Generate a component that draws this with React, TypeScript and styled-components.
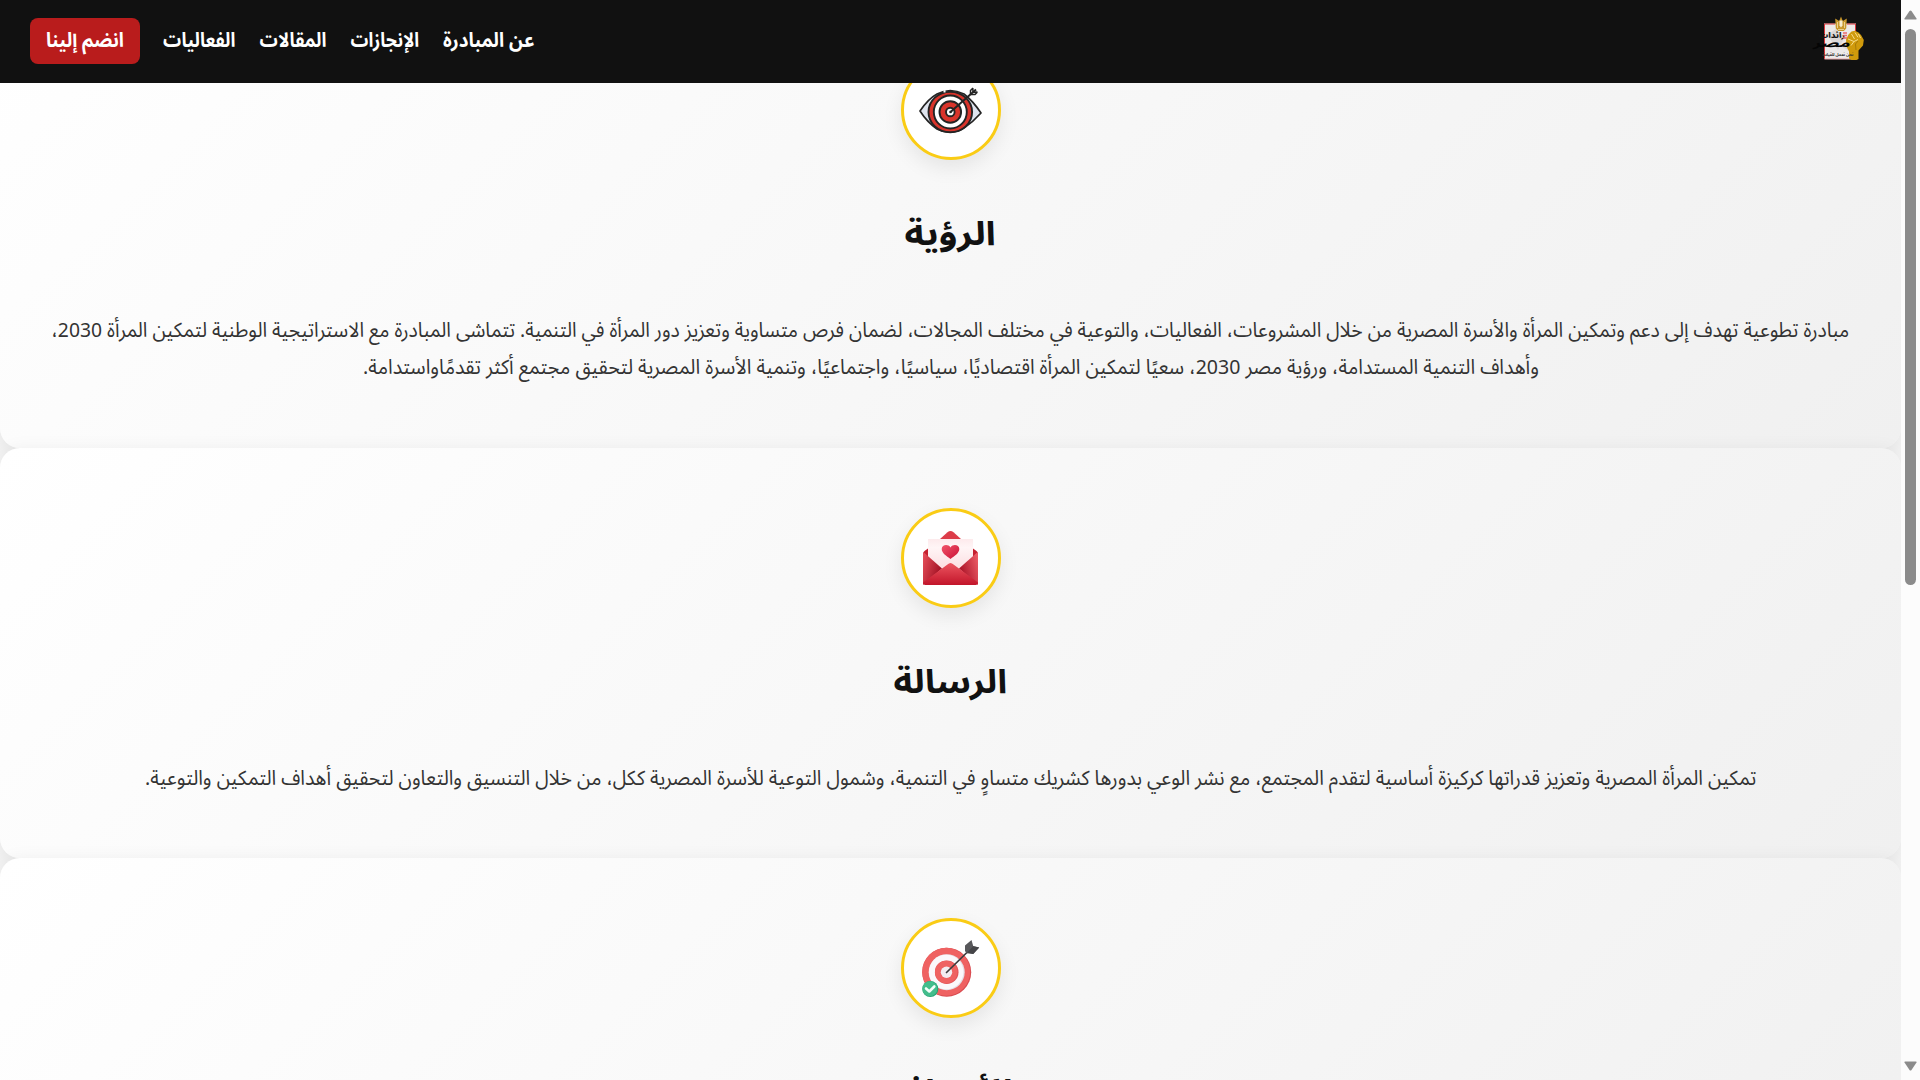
import React, { useLayoutEffect, useRef, useState } from "react";
import styled, { createGlobalStyle } from "styled-components";

const GlobalStyle = createGlobalStyle`
  *, *::before, *::after { box-sizing: border-box; }
  html, body { margin: 0; height: 100%; overflow: hidden; }
  body {
    background: #f5f5f5;
    font-family: "Noto Sans Arabic", "Noto Sans", "DejaVu Sans", sans-serif;
  }
  #root { height: 100%; }
`;

const Window = styled.div`
  display: flex;
  width: 100%;
  height: 1080px;
  overflow: hidden;
`;

const Viewport = styled.div`
  position: relative;
  flex: 1;
  min-width: 0;
  overflow: hidden;
`;

const Header = styled.header`
  position: absolute;
  inset: 0 0 auto 0;
  z-index: 10;
  display: flex;
  align-items: center;
  justify-content: space-between;
  height: 83px;
  padding: 0 36px 1px 30px;
  background: #111;
  direction: rtl;
`;

const Nav = styled.nav`
  display: flex;
  align-items: center;
  gap: 24px;
`;

const NavLink = styled.a`
  color: #fff;
  font-size: 20px;
  font-weight: 700;
  line-height: 32px;
  text-decoration: none;
`;

const JoinButton = styled(NavLink)`
  display: flex;
  align-items: center;
  justify-content: center;
  width: 110px;
  height: 46px;
  margin-right: -1px;
  border-radius: 8px;
  background: #b91c1c;
`;

const Sections = styled.main`
  display: flex;
  flex-direction: column;
  direction: rtl;
`;

const Card = styled.section`
  display: flex;
  flex-direction: column;
  align-items: center;
  flex-shrink: 0;
  padding: 60px 0 61px;
  border-radius: 20px;
  background: linear-gradient(135deg, #ffffff, #f0f0f0);
  box-shadow: 0 4px 20px rgba(0, 0, 0, 0.08);
`;

const IconCircle = styled.div`
  display: flex;
  align-items: center;
  justify-content: center;
  width: 100px;
  height: 100px;
  border: 3px solid #facc15;
  border-radius: 50%;
  background: #fff;
  box-shadow: 0 8px 20px rgba(0, 0, 0, 0.08);
`;

const Title = styled.h2`
  margin: 48px 0 0;
  color: #111;
  font-size: 33px;
  font-weight: 700;
  line-height: 54px;
`;

const Description = styled.div`
  display: flex;
  flex-direction: column;
  align-items: center;
  margin-top: 50px;
  color: #333;
  font-size: 20.5px;
  line-height: 37.4px;
`;

const FitBox = styled.span<{ $width: number }>`
  display: flex;
  justify-content: center;
  width: ${(p) => p.$width}px;
  white-space: nowrap;
`;

const FitInner = styled.span`
  flex-shrink: 0;
`;

/** A single line of text whose glyphs are condensed to fill the given width. */
function FitText({ width, children }: { width: number; children: string }) {
  const ref = useRef<HTMLSpanElement>(null);
  const [scale, setScale] = useState(1);
  useLayoutEffect(() => {
    if (ref.current) setScale(width / ref.current.offsetWidth);
  }, [width, children]);
  return (
    <FitBox $width={width}>
      <FitInner ref={ref} style={{ transform: `scaleX(${scale})` }}>
        {children}
      </FitInner>
    </FitBox>
  );
}

const Scrollbar = styled.div`
  display: flex;
  flex-direction: column;
  align-items: center;
  width: 19px;
  padding: 10px 0 9px;
  background: #fcfcfc;
`;

const Thumb = styled.div`
  width: 11px;
  height: 556px;
  margin: 9px 0 auto;
  border-radius: 6px;
  background: #8b8b8b;
`;

const LogoText = styled.text`
  font-family: "Noto Sans Arabic", "DejaVu Sans", sans-serif;
  font-weight: 800;
  text-anchor: middle;
  direction: rtl;
`;

const Arrow = ({ down }: { down?: boolean }) => (
  <svg width="13" height="10" viewBox="0 0 13 10">
    <path
      d={down ? "M1 .5h11q1 0 .5 1L7.5 9q-1 1.2-2 0L.5 1.500Q0 .5 1 .5z" : "M1 9.500h11q1 0 .5-1L7.500 1q-1-1.200-2 0L.5 8.500q-.5 1 .5 1z"}
      fill="#8b8b8b"
    />
  </svg>
);

const Logo = () => (
  <svg width="50" height="50" viewBox="0 0 50 50" overflow="visible">
    <rect x="9" y="7.500" width="32" height="35.500" fill="#ece9e8" />
    <path d="M12 19l9-6 8 9-6 12zM25 30l9-5 5 12z" fill="#dcd8d7" />
    <path d="M9.500 43V8H20M32 8h8.500V16" fill="none" stroke="#d9343a" strokeWidth="1" />
    <path d="M9.500 43h31" stroke="#e9a9ab" />
    <path d="M20.200 2.500l4 2.500 1.800-4.500L27.800 5l4-2.500-.6 10-2.400 2.500h-5.600l-2.400-2.500z" fill="#c9972b" />
    <path d="M24.500 4.500h3v5l-1.500 2-1.500-2z" fill="#f7ecd0" />
    <path d="M22.500 6v6M29.500 6v6M23 13.500h6" stroke="#f3dfae" strokeWidth=".8" />
    <path d="M33.500 18.500l3-3 3.500-.8 3.500 1.800 2.500 2.500 2.800 5-.8 5.500-4.500 5V43l-2 1h-5l-2.500-1.500v-7l-2.500-5-.5-7z" fill="#d09a0c" />
    <path d="M36.500 18l3 5M40 16.500l3 4.800M43.500 18l2 4M33 23l6 2.500 4-2M39 25.500l-3 4" fill="none" stroke="#f6dc8b" strokeWidth="1" />
    <path d="M43 25l-2.500 3 .5 6" fill="none" stroke="#9c7206" strokeWidth=".8" />
    <LogoText transform="translate(17 22) scale(1.05 .9)" fontSize="8.5" fill="#151515">رائدات</LogoText>
    <path d="M28 17h4M28.500 19.500h3.500M28 22h4" stroke="#ec6a6d" strokeWidth="1.300" />
    <LogoText transform="translate(16.500 31) skewX(-14) scale(1.35 .8)" fontSize="13" fill="#050505">مصر</LogoText>
    <LogoText transform="translate(23 39.500)" fontSize="4" fill="#333">نحن نعمل للقيادة</LogoText>
  </svg>
);

const VisionIcon = () => (
  <svg width="60" height="60" viewBox="0 0 60 60" overflow="visible">
    <path d="M-1 31Q7 19 16 14Q29 7 43 14Q52 21 60 33Q52 42 43 48Q29 56 16 49Q6 42-1 31z" fill="#dfe4ee" stroke="#242424" strokeWidth="1.700" strokeLinejoin="round" />
    <ellipse cx="29.300" cy="32" rx="21.800" ry="20.300" fill="#d9342b" stroke="#242424" strokeWidth="1.900" />
    <circle cx="29.300" cy="32" r="16.500" fill="#fff" stroke="#242424" strokeWidth="1.900" />
    <circle cx="29.300" cy="32" r="10.800" fill="#d9342b" stroke="#242424" strokeWidth="1.900" />
    <circle cx="29.300" cy="32" r="4.300" fill="#fff" stroke="#242424" strokeWidth="1.900" />
    <path d="M29.500 32L55 9.500" fill="none" stroke="#242424" strokeWidth="2" />
    <path d="M49.500 14.500V10.500L52 8M49.500 14.500h4.500L56.500 12M52 12l-.2-4M52 12.200l4.500-.2" fill="none" stroke="#242424" strokeWidth="1.500" />
    <path d="M22.500 11.300h2" stroke="#fff" strokeWidth="2.400" />
    <circle cx="29.500" cy="32" r="1.300" fill="#242424" />
  </svg>
);

const MessageIcon = () => (
  <svg width="60" height="60" viewBox="0 0 60 60">
    <defs>
      <linearGradient id="flap" x1="0" y1="0" x2="0" y2="1">
        <stop offset="0" stopColor="#ec5560" /><stop offset="1" stopColor="#c2152a" />
      </linearGradient>
      <linearGradient id="left" x1="0" y1="0" x2="1" y2=".5">
        <stop offset="0" stopColor="#e8505b" /><stop offset="1" stopColor="#9f0f22" />
      </linearGradient>
      <linearGradient id="right" x1="1" y1="0" x2="0" y2=".5">
        <stop offset="0" stopColor="#f0606a" /><stop offset="1" stopColor="#a91226" />
      </linearGradient>
      <linearGradient id="paper" x1="0" y1="0" x2="0" y2="1">
        <stop offset="0" stopColor="#fdeaec" /><stop offset=".25" stopColor="#fff5f6" /><stop offset="1" stopColor="#fbd9dd" />
      </linearGradient>
      <linearGradient id="heart" x1="0" y1="0" x2="1" y2="1">
        <stop offset="0" stopColor="#f2556a" /><stop offset="1" stopColor="#c90f35" />
      </linearGradient>
    </defs>
    <path d="M19 11L26.500 4.200q3-2.400 6 0L40 11z" fill="#dc3c49" />
    <path d="M2 26q0-2 1.500-3L7 20.500V40H2zM57 26q0-2-1.500-3L52 20.500V40h5z" fill="#c5202f" />
    <rect x="7" y="11" width="45" height="34" fill="url(#paper)" />
    <path d="M2 26.500q0-2.500 1.500-1.500L21 40.500 2 57z" fill="url(#left)" />
    <path d="M57 26.500q0-2.500-1.500-1.500L38 40.500 57 57z" fill="url(#right)" />
    <path d="M2 54.500L26.500 36.500q3-3 6 0L57 54.500q0 2.500-2.500 2.500h-50Q2 57 2 54.500z" fill="url(#flap)" />
    <path d="M29.500 31c-4-3-8.800-6-8.800-10 0-4.300 6.300-5.500 8.800-1.500 2.500-4 8.800-2.800 8.800 1.500 0 4-4.800 7-8.800 10z" fill="url(#heart)" />
  </svg>
);

const GoalsIcon = () => (
  <svg width="60" height="60" viewBox="0 0 60 60">
    <circle cx="25.700" cy="34.200" r="24.500" fill="#d94b50" />
    <circle cx="25.200" cy="33.800" r="24" fill="#ef6262" />
    <circle cx="25.700" cy="34.200" r="18" fill="#e4dfe6" />
    <circle cx="25.200" cy="34" r="17.300" fill="#fbf8fb" />
    <circle cx="25.700" cy="34.200" r="11.800" fill="#e25357" />
    <circle cx="25.200" cy="34" r="11.200" fill="#ef6262" />
    <circle cx="25.500" cy="34.200" r="5.700" fill="#f3edf1" />
    <path d="M25.500 34.500L51 9.500" stroke="#3c3c3e" strokeWidth="1.700" strokeLinecap="round" />
    <path d="M44 13V7.500L50.500 2l1.700 6 6 1.500-6 6.500-6.700-.8z" fill="#58585b" />
    <path d="M46 14.500l6.200-6.200 6 1.200-6 6.500z" fill="#454548" />
    <circle cx="9.300" cy="51" r="8" fill="#25a474" />
    <circle cx="8.800" cy="50.800" r="7.500" fill="#43bd8c" />
    <path d="M5 50.500l3.300 3 5-5" fill="none" stroke="#f4fffa" strokeWidth="2.600" strokeLinecap="round" strokeLinejoin="round" />
  </svg>
);

const links = [
  { label: "عن المبادرة", width: 92 },
  { label: "الإنجازات", width: 69 },
  { label: "المقالات", width: 67 },
  { label: "الفعاليات", width: 72 },
];

const cards = [
  {
    icon: <VisionIcon />,
    title: "الرؤية",
    titleWidth: 91,
    lines: [
      { text: "مبادرة تطوعية تهدف إلى دعم وتمكين المرأة والأسرة المصرية من خلال المشروعات، الفعاليات، والتوعية في مختلف المجالات، لضمان فرص متساوية وتعزيز دور المرأة في التنمية. تتماشى المبادرة مع الاستراتيجية الوطنية لتمكين المرأة 2030،", width: 1798 },
      { text: "وأهداف التنمية المستدامة، ورؤية مصر 2030، سعيًا لتمكين المرأة اقتصاديًا، سياسيًا، واجتماعيًا، وتنمية الأسرة المصرية لتحقيق مجتمع أكثر تقدمًاواستدامة.", width: 1176 },
    ],
  },
  {
    icon: <MessageIcon />,
    title: "الرسالة",
    titleWidth: 114,
    lines: [
      { text: "تمكين المرأة المصرية وتعزيز قدراتها كركيزة أساسية لتقدم المجتمع، مع نشر الوعي بدورها كشريك متساوٍ في التنمية، وشمول التوعية للأسرة المصرية ككل، من خلال التنسيق والتعاون لتحقيق أهداف التمكين والتوعية.", width: 1611 },
    ],
  },
  { icon: <GoalsIcon />, title: "الأهداف", titleWidth: 126, lines: [] },
];

export default function App() {
  return (
    <Window>
      <GlobalStyle />
      <Viewport>
        <Header>
          <Logo />
          <Nav>
            {links.map((l) => (
              <NavLink key={l.label}>
                <FitText width={l.width}>{l.label}</FitText>
              </NavLink>
            ))}
            <JoinButton>
              <FitText width={78}>انضم إلينا</FitText>
            </JoinButton>
          </Nav>
        </Header>
        <Sections>
          {cards.map((c) => (
            <Card key={c.title}>
              <IconCircle>{c.icon}</IconCircle>
              <Title>
                <FitText width={c.titleWidth}>{c.title}</FitText>
              </Title>
              <Description>
                {c.lines.map((l) => (
                  <FitText key={l.text} width={l.width}>{l.text}</FitText>
                ))}
              </Description>
            </Card>
          ))}
        </Sections>
      </Viewport>
      <Scrollbar>
        <Arrow />
        <Thumb />
        <Arrow down />
      </Scrollbar>
    </Window>
  );
}
